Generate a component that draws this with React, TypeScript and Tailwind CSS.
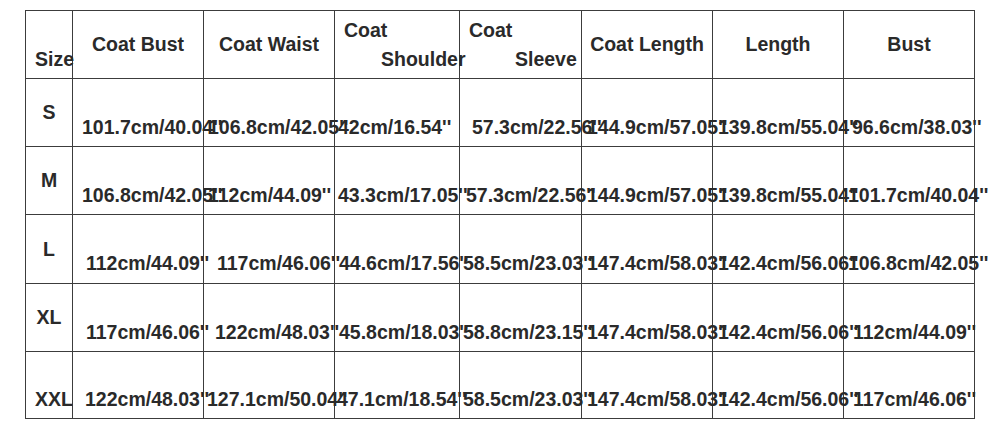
import React from "react";

type Cell = { t: string; c: string };
type Row = { size: string; twoLine: boolean; cells: Cell[] };

const rows: Row[] = [
  {
    size: "S",
    twoLine: false,
    cells: [
      { t: "101.7cm/40.04''", c: "pl-[9px]" },
      { t: "106.8cm/42.05''", c: "pl-[4px]" },
      { t: "42cm/16.54''", c: "pl-[3px]" },
      { t: "57.3cm/22.56''", c: "pl-[12px]" },
      { t: "144.9cm/57.05''", c: "pl-[5px]" },
      { t: "139.8cm/55.04''", c: "pl-[5px]" },
      { t: "96.6cm/38.03''", c: "pl-[8px]" },
    ],
  },
  {
    size: "M",
    twoLine: false,
    cells: [
      { t: "106.8cm/42.05''", c: "pl-[9px]" },
      { t: "112cm/44.09''", c: "pl-[4px]" },
      { t: "43.3cm/17.05''", c: "pl-[3px]" },
      { t: "57.3cm/22.56''", c: "pl-[6px]" },
      { t: "144.9cm/57.05''", c: "pl-[5px]" },
      { t: "139.8cm/55.04''", c: "pl-[5px]" },
      { t: "101.7cm/40.04''", c: "pl-[4px]" },
    ],
  },
  {
    size: "L",
    twoLine: false,
    cells: [
      { t: "112cm/44.09''", c: "pl-[13px]" },
      { t: "117cm/46.06''", c: "pl-[13px]" },
      { t: "44.6cm/17.56''", c: "pl-[4px]" },
      { t: "58.5cm/23.03''", c: "pl-[3px]" },
      { t: "147.4cm/58.03''", c: "pl-[5px]" },
      { t: "142.4cm/56.06''", c: "pl-[5px]" },
      { t: "106.8cm/42.05''", c: "pl-[4px]" },
    ],
  },
  {
    size: "XL",
    twoLine: false,
    cells: [
      { t: "117cm/46.06''", c: "pl-[13px]" },
      { t: "122cm/48.03''", c: "pl-[11px]" },
      { t: "45.8cm/18.03''", c: "pl-[4px]" },
      { t: "58.8cm/23.15''", c: "pl-[3px]" },
      { t: "147.4cm/58.03''", c: "pl-[5px]" },
      { t: "142.4cm/56.06''", c: "pl-[5px]" },
      { t: "112cm/44.09''", c: "pl-[9px]" },
    ],
  },
  {
    size: "XXL",
    twoLine: true,
    cells: [
      { t: "122cm/48.03''", c: "pl-[12px]" },
      { t: "127.1cm/50.04''", c: "pl-[3px]" },
      { t: "47.1cm/18.54''", c: "pl-[2px]" },
      { t: "58.5cm/23.03''", c: "pl-[3px]" },
      { t: "147.4cm/58.03''", c: "pl-[5px]" },
      { t: "142.4cm/56.06''", c: "pl-[5px]" },
      { t: "117cm/46.06''", c: "pl-[9px]" },
    ],
  },
];

const cellBase =
  "flex flex-col justify-center border-r border-b border-[#3c3c3c] whitespace-nowrap leading-[29px]";

export default function App() {
  return (
    <div
      className="w-[1000px] h-[430px] bg-white pt-[10px] pl-[25px] text-[#2a2a2a] font-bold text-[19.5px]"
      style={{ fontFamily: '"Liberation Sans", Arial, sans-serif' }}
    >
      <div className="grid w-[950px] grid-cols-[47px_131px_131px_125px_122px_131px_131px_131px] grid-rows-[68px_68px_68px_69px_68px_67px] border-t border-l border-[#3c3c3c]">
        {/* Header row */}
        <div className={`${cellBase} px-[9px] text-left`}>
          <div>{"\u00a0"}</div>
          <div>Size</div>
        </div>
        <div className={`${cellBase} text-center`}>
          <div>Coat Bust</div>
        </div>
        <div className={`${cellBase} text-center`}>
          <div>Coat Waist</div>
        </div>
        <div className={`${cellBase} text-left`}>
          <div className="pl-[9px]">Coat</div>
          <div className="pl-[46px]">Shoulder</div>
        </div>
        <div className={`${cellBase} text-left`}>
          <div className="pl-[9px]">Coat</div>
          <div className="pl-[55px]">Sleeve</div>
        </div>
        <div className={`${cellBase} text-center`}>
          <div>Coat Length</div>
        </div>
        <div className={`${cellBase} text-center`}>
          <div>Length</div>
        </div>
        <div className={`${cellBase} text-center`}>
          <div>Bust</div>
        </div>

        {rows.map((r) => (
          <React.Fragment key={r.size}>
            <div className={`${cellBase} px-[9px] text-center`}>
              {r.twoLine ? <div>{"\u00a0"}</div> : null}
              <div>{r.size}</div>
            </div>
            {r.cells.map((cell, i) => (
              <div key={i} className={`${cellBase} ${cell.c} text-left`}>
                <div>{"\u00a0"}</div>
                <div>{cell.t}</div>
              </div>
            ))}
          </React.Fragment>
        ))}
      </div>
    </div>
  );
}
